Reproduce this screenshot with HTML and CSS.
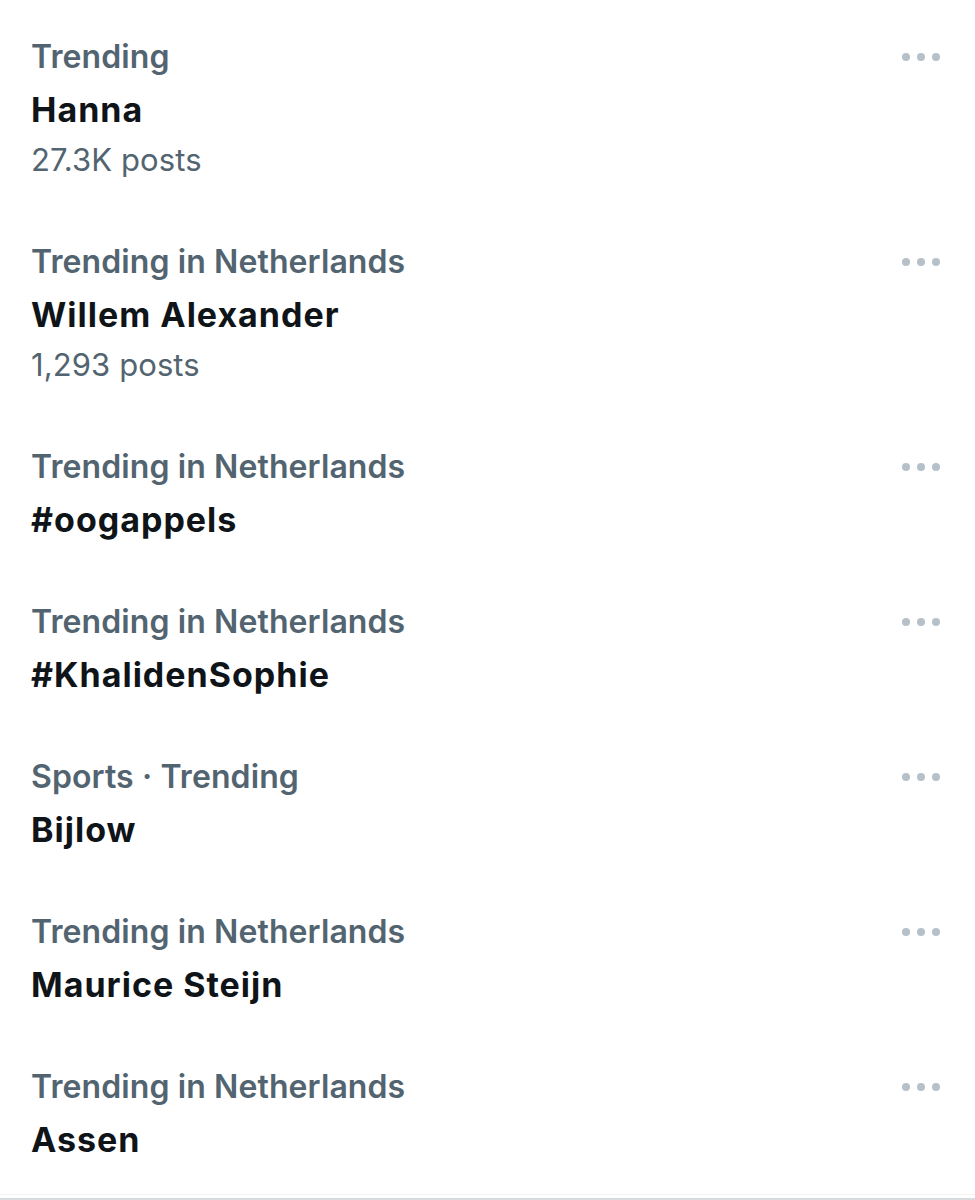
FILE: index.html
```html
<!DOCTYPE html>
<html lang="en">
<head>
<meta charset="utf-8">
<title>Trending</title>
<link rel="stylesheet" href="styles.css">
</head>
<body>
<main class="trends">
  <div class="trend">
    <div class="trend-body">
      <div class="trend-label">Trending</div>
      <div class="trend-name">Hanna</div>
      <div class="trend-count">27.3K posts</div>
    </div>
    <div class="trend-more" aria-label="More"><span></span><span></span><span></span></div>
  </div>
  <div class="trend">
    <div class="trend-body">
      <div class="trend-label">Trending in Netherlands</div>
      <div class="trend-name">Willem Alexander</div>
      <div class="trend-count">1,293 posts</div>
    </div>
    <div class="trend-more" aria-label="More"><span></span><span></span><span></span></div>
  </div>
  <div class="trend">
    <div class="trend-body">
      <div class="trend-label">Trending in Netherlands</div>
      <div class="trend-name">#oogappels</div>
    </div>
    <div class="trend-more" aria-label="More"><span></span><span></span><span></span></div>
  </div>
  <div class="trend">
    <div class="trend-body">
      <div class="trend-label">Trending in Netherlands</div>
      <div class="trend-name">#KhalidenSophie</div>
    </div>
    <div class="trend-more" aria-label="More"><span></span><span></span><span></span></div>
  </div>
  <div class="trend">
    <div class="trend-body">
      <div class="trend-label">Sports · Trending</div>
      <div class="trend-name">Bijlow</div>
    </div>
    <div class="trend-more" aria-label="More"><span></span><span></span><span></span></div>
  </div>
  <div class="trend">
    <div class="trend-body">
      <div class="trend-label">Trending in Netherlands</div>
      <div class="trend-name">Maurice Steijn</div>
    </div>
    <div class="trend-more" aria-label="More"><span></span><span></span><span></span></div>
  </div>
  <div class="trend">
    <div class="trend-body">
      <div class="trend-label">Trending in Netherlands</div>
      <div class="trend-name">Assen</div>
    </div>
    <div class="trend-more" aria-label="More"><span></span><span></span><span></span></div>
  </div>
</main>
<div class="divider"></div>
</body>
</html>
```

FILE: styles.css
```css
html, body {
  margin: 0;
  padding: 0;
  background: #ffffff;
}

body {
  font-family: Inter, "Noto Sans", "Liberation Sans", sans-serif;
  width: 975px;
  height: 1200px;
  overflow: hidden;
  display: flex;
  flex-direction: column;
}

.trends {
  display: flex;
  flex-direction: column;
  padding-top: 5px;
  flex: 1;
}

.trend {
  display: flex;
  justify-content: space-between;
  align-items: flex-start;
  padding: 27px 35px 25px 31px;
}

.trend-body {
  display: flex;
  flex-direction: column;
}

.trend-label {
  font-size: 32px;
  line-height: 50px;
  font-weight: 600;
  color: #536471;
  letter-spacing: 0.1px;
}

.trend-name {
  margin-top: 3px;
  font-size: 34px;
  line-height: 50px;
  font-weight: 700;
  color: #0f1419;
  letter-spacing: 1px;
}

.trend-count {
  font-size: 31px;
  line-height: 50px;
  font-weight: 400;
  color: #536471;
  letter-spacing: 0.1px;
}

.trend-more {
  display: flex;
  gap: 7px;
  height: 50px;
  align-items: center;
}

.trend-more span {
  width: 8px;
  height: 8px;
  border-radius: 50%;
  background: #b6c0c9;
}

.divider {
  height: 5px;
  border-top: 1px solid #f2f3f4;
  background: linear-gradient(#ffffff 0 3px, #d8dcdf 3px);
}
```
